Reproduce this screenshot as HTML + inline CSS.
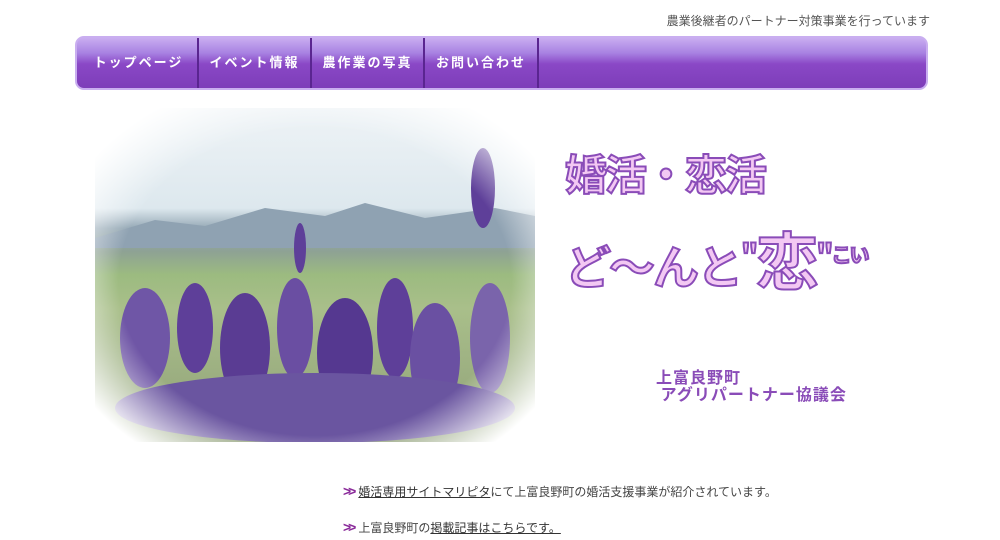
<!DOCTYPE html>
<html><head><meta charset="utf-8"><style>
body{margin:0;width:1000px;height:540px;background:#fff;font-family:"Liberation Sans","Noto Sans CJK JP",sans-serif;position:relative;overflow:hidden}
.tag{position:absolute;right:70px;top:12px;font-size:12px;color:#555}
.nav{position:absolute;left:75px;top:36px;width:853px;height:54px;border-radius:9px;border:2px solid #c9aef0;box-sizing:border-box;background:linear-gradient(#c9adf0 0%,#a882e2 30%,#8a48c6 52%,#7d3db9 100%);padding-left:3px}
.nav a{float:left;height:50px;line-height:50px;color:#fff;font-weight:bold;font-size:13px;letter-spacing:2px;text-decoration:none;border-right:2px solid #5a2590;text-align:center;box-sizing:border-box}
.photo{position:absolute;left:95px;top:108px;width:440px;height:334px;-webkit-mask-image:radial-gradient(ellipse 62% 64% at 50% 52%,#000 72%,transparent 100%);mask-image:radial-gradient(ellipse 62% 64% at 50% 52%,#000 72%,transparent 100%)}
.t1,.t2{position:absolute;color:#f3c8f3;-webkit-text-stroke:2px #8a4cb8;font-weight:bold;font-family:"Noto Sans CJK JP",sans-serif}
.t3{position:absolute;color:#8a4cb8;font-weight:bold;font-size:16px;line-height:17px;letter-spacing:1px;font-family:"Noto Sans CJK JP",sans-serif}
.links{position:absolute;left:343px;font-size:12px;color:#444}
.links b{color:#8a2a9a;font-size:14px;letter-spacing:-3px;margin-right:5px}
.links u{color:#333}
</style></head><body>
<div class="tag">農業後継者のパートナー対策事業を行っています</div>
<div class="nav"><a style="width:119px">トップページ</a><a style="width:113px">イベント情報</a><a style="width:113px">農作業の写真</a><a style="width:114px">お問い合わせ</a></div>
<svg class="photo" viewBox="0 0 440 334">
<defs><linearGradient id="g" x1="0" y1="0" x2="0" y2="1">
<stop offset="0" stop-color="#eef3f6"/><stop offset=".3" stop-color="#dde8ee"/><stop offset=".36" stop-color="#96a9b6"/><stop offset=".43" stop-color="#8ea294"/><stop offset=".5" stop-color="#9cbb80"/><stop offset=".6" stop-color="#a9bf8a"/><stop offset="1" stop-color="#8f9f78"/></linearGradient></defs>
<rect width="440" height="334" fill="url(#g)"/>
<polygon points="0,130 60,112 110,118 170,100 230,108 270,95 330,110 400,100 440,108 440,140 0,140" fill="#8fa2b2"/>
<g fill="#5e3f99">
<ellipse cx="388" cy="80" rx="12" ry="40"/><ellipse cx="205" cy="140" rx="6" ry="25"/>
<ellipse cx="50" cy="230" rx="25" ry="50" fill="#6f56a6"/><ellipse cx="100" cy="220" rx="18" ry="45"/>
<ellipse cx="150" cy="240" rx="25" ry="55" fill="#5a3c93"/><ellipse cx="200" cy="220" rx="18" ry="50" fill="#6a4ea2"/>
<ellipse cx="250" cy="245" rx="28" ry="55" fill="#553890"/><ellipse cx="300" cy="220" rx="18" ry="50"/>
<ellipse cx="340" cy="250" rx="25" ry="55" fill="#6a50a2"/><ellipse cx="395" cy="230" rx="20" ry="55" fill="#7a64ab"/>
<ellipse cx="220" cy="300" rx="200" ry="35" fill="#6a55a0"/>
</g>
</svg>
<div class="t1" style="left:565px;top:142px;font-size:42px;letter-spacing:-2px">婚活・恋活</div>
<div class="t2" style="left:565px;top:212px;font-size:46px;letter-spacing:-2px">ど〜んと<span style="font-size:30px;vertical-align:18px">"</span><span style="font-size:62px">恋</span><span style="font-size:30px;vertical-align:18px">"</span><span style="font-size:20px;vertical-align:22px">こい</span></div>
<div class="t3" style="left:656px;top:368px">上富良野町<br>&nbsp;アグリパートナー協議会</div>
<div class="links" style="top:483px"><b>&gt;&gt;</b><u>婚活専用サイトマリピタ</u>にて上富良野町の婚活支援事業が紹介されています。</div>
<div class="links" style="top:519px"><b>&gt;&gt;</b>上富良野町の<u>掲載記事はこちらです。</u></div>
</body></html>
